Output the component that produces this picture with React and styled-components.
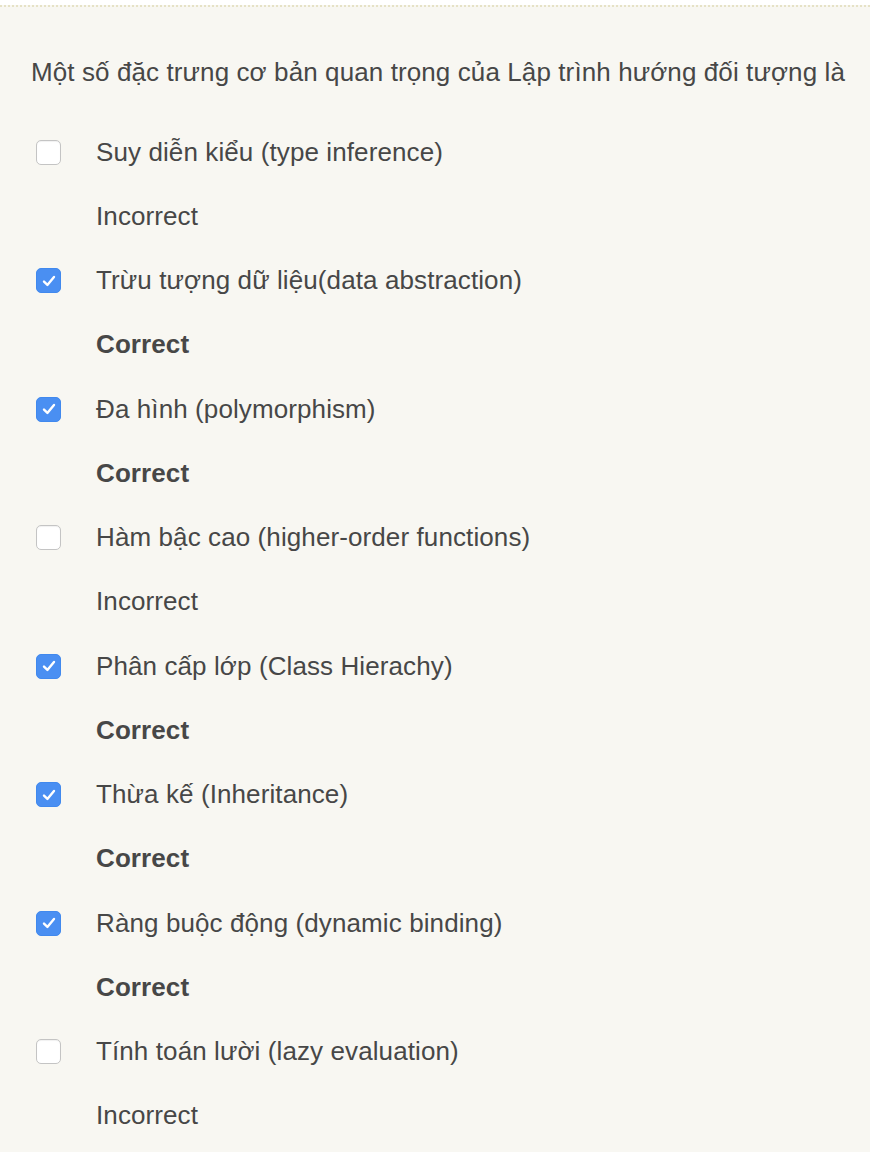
import React from 'react';
import styled, { createGlobalStyle } from 'styled-components';

const GlobalStyle = createGlobalStyle`
  html, body {
    margin: 0;
    padding: 0;
    background: #fff;
  }
  body {
    font-family: "Liberation Sans", Arial, Helvetica, sans-serif;
  }
`;

const Page = styled.div`
  padding-top: 5px;
  background: #fff;
`;

const Panel = styled.div`
  border-top: 2px dotted #e6e2c6;
  background: #f8f7f2;
  min-height: 1147px;
  box-sizing: border-box;
  padding: 49px 0 0 0;
  color: #474747;
  font-size: 26px;
  letter-spacing: 0.1px;
`;

const Question = styled.div`
  padding-left: 31px;
  line-height: 32px;
  margin-bottom: 32px;
`;

const Row = styled.div`
  display: flex;
  align-items: center;
  height: 64.25px;
  padding-left: ${p => (p.indent ? '96px' : '36px')};
  font-weight: ${p => (p.bold ? 700 : 400)};
`;

const Box = styled.span`
  width: 25px;
  height: 25px;
  box-sizing: border-box;
  border-radius: 5px;
  margin-right: 35px;
  display: flex;
  align-items: center;
  justify-content: center;
  flex-shrink: 0;
  background: ${p => (p.checked ? '#4a8ff2' : '#fff')};
  border: ${p => (p.checked ? '1px solid #4189ee' : '1px solid #c4c4c4')};
  box-shadow: ${p => (p.checked ? 'none' : 'inset 0 1px 1px rgba(0,0,0,0.06)')};
`;

const Check = () => (
  <svg width="16" height="16" viewBox="0 0 16 16">
    <path d="M3 8.6 L6.4 11.9 L13 4" fill="none" stroke="#fff" strokeWidth="2.4" strokeLinecap="round" strokeLinejoin="round" />
  </svg>
);

const options = [
  { text: 'Suy diễn kiểu (type inference)', checked: false },
  { text: 'Trừu tượng dữ liệu(data abstraction)', checked: true },
  { text: 'Đa hình (polymorphism)', checked: true },
  { text: 'Hàm bậc cao (higher-order functions)', checked: false },
  { text: 'Phân cấp lớp (Class Hierachy)', checked: true },
  { text: 'Thừa kế (Inheritance)', checked: true },
  { text: 'Ràng buộc động (dynamic binding)', checked: true },
  { text: 'Tính toán lười (lazy evaluation)', checked: false },
];

export default function App() {
  return (
    <Page>
      <GlobalStyle />
      <Panel>
        <Question>Một số đặc trưng cơ bản quan trọng của Lập trình hướng đối tượng là</Question>
        {options.map((item, index) => (
          <React.Fragment key={index}>
            <Row>
              <Box checked={item.checked}>{item.checked && <Check />}</Box>
              {item.text}
            </Row>
            <Row indent bold={item.checked}>
              {item.checked ? 'Correct' : 'Incorrect'}
            </Row>
          </React.Fragment>
        ))}
      </Panel>
    </Page>
  );
}
